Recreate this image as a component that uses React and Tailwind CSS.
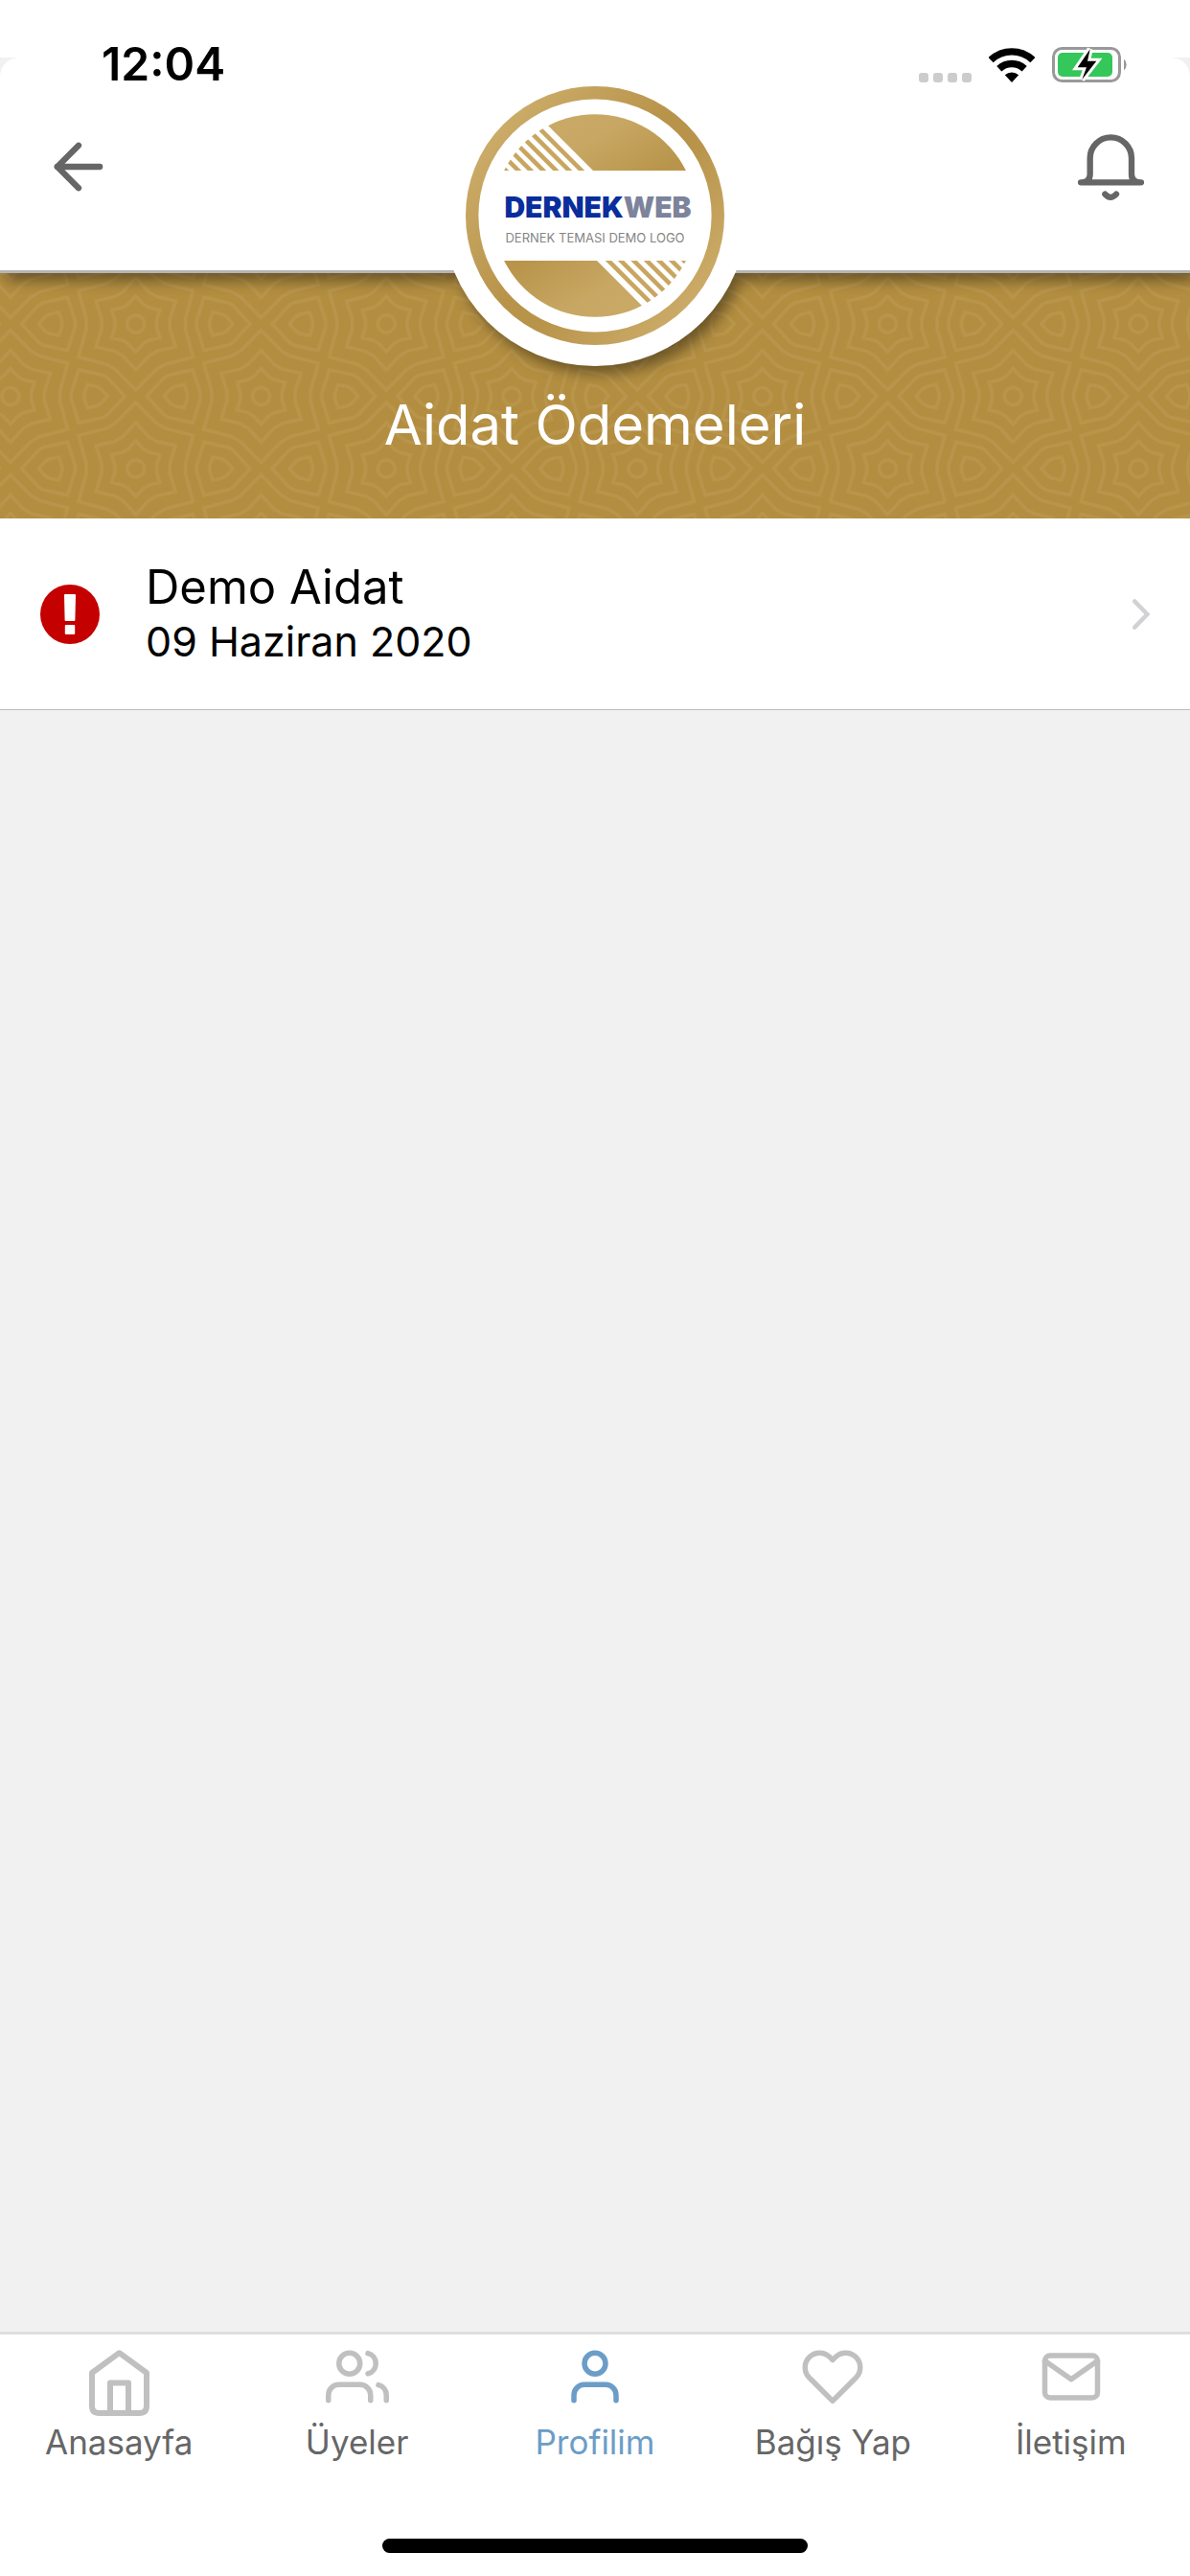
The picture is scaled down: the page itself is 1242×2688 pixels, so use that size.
import React from "react";
import { FiArrowLeft, FiHeart, FiMail, FiUser, FiUsers } from "react-icons/fi";

const TILE_W = 261.6;
const TILE_H = 151;

// Closed outline with n tips at radius `tip` and two softer vertices at radius `mid` between tips.
function outline(cx, cy, n, start, tip, mid, spread) {
  const points = [];
  const step = 360 / n;
  const add = (radius, degrees) => {
    const a = (degrees * Math.PI) / 180;
    points.push(`${(cx + radius * Math.cos(a)).toFixed(1)},${(cy + radius * Math.sin(a)).toFixed(1)}`);
  };
  for (let i = 0; i < n; i += 1) {
    const base = start + i * step;
    add(tip, base);
    add(mid, base + step / 2 - spread);
    add(mid, base + step / 2 + spread);
  }
  return points.join(" ");
}

function Star({ x, y }) {
  return (
    <g>
      <circle cx={x} cy={y} r="9" />
      <polygon points={outline(x, y, 6, 90, 29, 22, 9)} />
      <polygon points={outline(x, y, 6, 90, 48, 36, 8)} />
      <polygon points={outline(x, y, 6, 90, 69, 52, 6)} />
    </g>
  );
}

function Drop({ x, y, start }) {
  return (
    <g>
      <polygon points={outline(x, y, 3, start, 32, 24, 7)} />
      <polygon points={outline(x, y, 3, start, 14, 10.5, 14)} />
    </g>
  );
}

function BandPattern() {
  const stars = [];
  const drops = [];
  const third = TILE_H / Math.sqrt(3);
  for (let col = -1; col <= 3; col += 1) {
    for (let row = -1; row <= 2; row += 1) {
      const x = (col * TILE_W) / 2;
      const y = row * TILE_H + (Math.abs(col) % 2 ? TILE_H / 2 : 0);
      stars.push([x, y]);
      drops.push([x + third, y, 0], [x - third, y, 180]);
    }
  }
  return (
    <svg className="absolute inset-0 h-full w-full" aria-hidden="true">
      <defs>
        <pattern
          id="band"
          width={TILE_W}
          height={TILE_H}
          patternUnits="userSpaceOnUse"
          patternTransform="translate(141.7 53)"
        >
          <g fill="none" stroke="#b9954c" strokeWidth="3.4">
            {stars.map(([x, y]) => (
              <Star key={`${x}/${y}`} x={x} y={y} />
            ))}
            {drops.map(([x, y, start]) => (
              <Drop key={`${x}/${y}`} x={x} y={y} start={start} />
            ))}
          </g>
        </pattern>
      </defs>
      <rect width="100%" height="100%" fill="url(#band)" />
    </svg>
  );
}

function LogoCap() {
  return (
    <g clipPath="url(#cap)">
      <path d="M86 41 L133 88 H250 V20 H65 Z" fill="url(#gold)" />
      <g stroke="#c8a660" strokeWidth="4.6">
        {[121, 108, 94.5, 81, 68, 55, 42].map((x) => (
          <path key={x} d={`M${x + 4} ${92} L${x - 76} 12`} />
        ))}
      </g>
    </g>
  );
}

function Logo() {
  return (
    <svg viewBox="0 0 270 270" className="w-[270px]" role="img" aria-label="Dernekweb">
      <defs>
        <linearGradient id="gold" x1="0" y1="0" x2="1" y2="0.6">
          <stop offset="0" stopColor="#cbab68" />
          <stop offset="0.5" stopColor="#c7a763" />
          <stop offset="1" stopColor="#b9954b" />
        </linearGradient>
        <linearGradient id="ring" x1="0.15" y1="0.1" x2="0.95" y2="0.8">
          <stop offset="0" stopColor="#cbab68" />
          <stop offset="0.45" stopColor="#b8934a" />
          <stop offset="0.6" stopColor="#b8934a" />
          <stop offset="1" stopColor="#cbab68" />
        </linearGradient>
        <clipPath id="cap">
          <path d="M40.1 88 A106 106 0 0 1 229.9 88 Z" />
        </clipPath>
      </defs>
      <circle cx="135" cy="135" r="128.3" fill="#fff" stroke="url(#ring)" strokeWidth="13.4" />
      <LogoCap />
      <g transform="rotate(180 135 135)">
        <LogoCap />
      </g>
      <text x="138" y="137" textAnchor="middle" fontSize="30" fontWeight="900" fill="#0a2d9c">
        DERNEK<tspan fill="#7c839b">WEB</tspan>
      </text>
      <text x="135" y="163" textAnchor="middle" fontSize="13" fill="#858585">
        DERNEK TEMASI DEMO LOGO
      </text>
    </svg>
  );
}

function WifiIcon() {
  return (
    <svg viewBox="0 0 48 36" className="h-9 w-12" aria-label="Wi-Fi" role="img">
      <g fill="none" stroke="#000" strokeWidth="7.4">
        <path d="M2.1 12.6 A31.8 31.8 0 0 1 45.9 12.6" />
        <path d="M10.8 21.8 A19.2 19.2 0 0 1 37.2 21.8" />
      </g>
      <path d="M24 36 L16.8 28.3 A10.6 10.6 0 0 1 31.2 28.3 Z" />
    </svg>
  );
}

function BatteryIcon() {
  const bolt = "M39.7 2.3 L26.7 21.3 H36 L31.3 34 L46.3 14.7 H37 Z";
  return (
    <svg viewBox="0 0 80 37" className="h-[37px] w-20" aria-label="Battery charging" role="img">
      <rect x="1.5" y="1.5" width="69" height="34" rx="9" fill="none" stroke="#999" strokeWidth="3" />
      <rect x="6" y="6" width="57" height="25" rx="5" fill="#34c759" />
      <path d="M75 12.5 A8 8 0 0 1 75 24.5 Z" fill="#999" />
      <path d={bolt} fill="#fff" stroke="#fff" strokeWidth="6" />
      <path d={bolt} />
    </svg>
  );
}

function BellIcon() {
  return (
    <svg viewBox="675 420 207 210" className="h-[70px] w-[69px]" aria-hidden="true">
      <g fill="none" stroke="currentColor" strokeWidth="19" strokeLinecap="round" strokeLinejoin="round">
        <path d="M684 571 C703 571 713 562 713 545 V495 A65 65 0 0 1 843 495 V545 C843 562 853 571 873 571 Z" />
        <path d="M760 608 Q777 627 795 608" />
      </g>
    </svg>
  );
}

function AlertIcon() {
  return (
    <svg viewBox="0 0 62 62" className="w-[62px]" role="img" aria-label="Ödenmedi">
      <circle cx="31" cy="31" r="31" fill="#c40000" />
      <g fill="#fff" stroke="#fff" strokeWidth="2" strokeLinejoin="round">
        <path d="M26 11 H36 L35.4 37 H26.6 Z" />
        <path d="M26.8 43 H35.2 V51 H26.8 Z" />
      </g>
    </svg>
  );
}

function HomeIcon() {
  return (
    <svg viewBox="0 0 63 70" className="mt-1 h-[70px] w-[63px]" aria-hidden="true">
      <g fill="none" stroke="currentColor" strokeWidth="6" strokeLinejoin="round">
        <path d="M3 25 L31.5 4.2 L60 25 V59.5 Q60 67 52.5 67 H10.5 Q3 67 3 59.5 Z" />
        <path d="M22 66 V35.5 H41 V66" />
      </g>
    </svg>
  );
}

const TABS = [
  { label: "Anasayfa", icon: <HomeIcon /> },
  { label: "Üyeler", icon: <FiUsers size={66} aria-hidden="true" /> },
  { label: "Profilim", icon: <FiUser size={66} aria-hidden="true" />, active: true },
  { label: "Bağış Yap", icon: <FiHeart size={66} aria-hidden="true" /> },
  { label: "İletişim", icon: <FiMail size={66} aria-hidden="true" /> },
];

export default function App() {
  return (
    <div className="flex min-h-screen flex-col bg-[#f1f1f1] font-['Inter','Liberation_Sans',sans-serif]">
      <header className="relative z-10 border-b-3 border-[#b5b5b8] bg-[#f1f1f1] drop-shadow-[6px_8px_7px_rgba(0,0,0,0.4)]">
        <div className="absolute inset-x-0 top-0 h-15 bg-white" />
        <div className="absolute inset-x-0 top-15 bottom-0 rounded-t-[20px] bg-white" />
        <div className="absolute top-16 left-1/2 size-[318px] -translate-x-1/2 rounded-full bg-white" />
        <div className="absolute top-[90px] left-1/2 -translate-x-1/2">
          <Logo />
        </div>

        <div className="relative flex h-[134px] items-center justify-between pr-16 pl-[106px]">
          <time className="text-[48px] leading-none font-semibold">12:04</time>
          <div className="flex items-end gap-[18px]">
            <div className="flex gap-[5px]" role="img" aria-label="No signal">
              <span className="size-[10px] rounded-[3px] bg-[#ccc]" />
              <span className="size-[10px] rounded-[3px] bg-[#ccc]" />
              <span className="size-[10px] rounded-[3px] bg-[#ccc]" />
              <span className="size-[10px] rounded-[3px] bg-[#ccc]" />
            </div>
            <WifiIcon />
            <BatteryIcon />
          </div>
        </div>

        <div className="relative flex h-[148px] items-start justify-between px-12 text-[#666]">
          <button type="button" aria-label="Geri" className="-ml-1 pt-[2px]">
            <FiArrowLeft size={76} aria-hidden="true" />
          </button>
          <button type="button" aria-label="Bildirimler" className="pt-[6px]">
            <BellIcon />
          </button>
        </div>
      </header>

      <section className="relative bg-[#b38e40] pt-[117px] pb-[57px]">
        <BandPattern />
        <h1 className="relative text-center text-[58px] leading-[82px] font-normal text-white">
          Aidat Ödemeleri
        </h1>
      </section>

      <main className="flex-1">
        <a
          href="#demo-aidat"
          className="flex items-center gap-12 border-b border-[#bcbcc0] bg-white px-[42px] py-[43px] text-black"
        >
          <AlertIcon />
          <span className="flex flex-1 flex-col">
            <span className="text-[49px] leading-[58px]">Demo Aidat</span>
            <span className="text-[43px] leading-[55px]">09 Haziran 2020</span>
          </span>
          <svg viewBox="0 0 18 32" className="h-8 w-[18px]" aria-hidden="true">
            <path
              d="M2.2 2.4 L15.4 16 L2.2 29.6"
              fill="none"
              stroke="#d1d1d6"
              strokeWidth="4.4"
              strokeLinecap="round"
            />
          </svg>
        </a>
      </main>

      <footer className="border-t-3 border-[#dedede] bg-white pb-6">
        <nav className="grid h-[213px] grid-cols-5 pt-[11px]">
          {TABS.map((tab) => (
            <a
              key={tab.label}
              href={`#${tab.label}`}
              aria-current={tab.active ? "page" : undefined}
              className="flex flex-col items-center"
            >
              <span className={tab.active ? "h-[79px] text-[#6b9dc8]" : "h-[79px] text-[#c0c0c0]"}>
                {tab.icon}
              </span>
              <span
                className={
                  tab.active
                    ? "text-[35px] leading-[44px] text-[#6b9dc8]"
                    : "text-[35px] leading-[44px] text-[#666]"
                }
              >
                {tab.label}
              </span>
            </a>
          ))}
        </nav>
        <div className="mx-auto h-[15px] w-[444px] rounded-full bg-black" />
      </footer>
    </div>
  );
}
